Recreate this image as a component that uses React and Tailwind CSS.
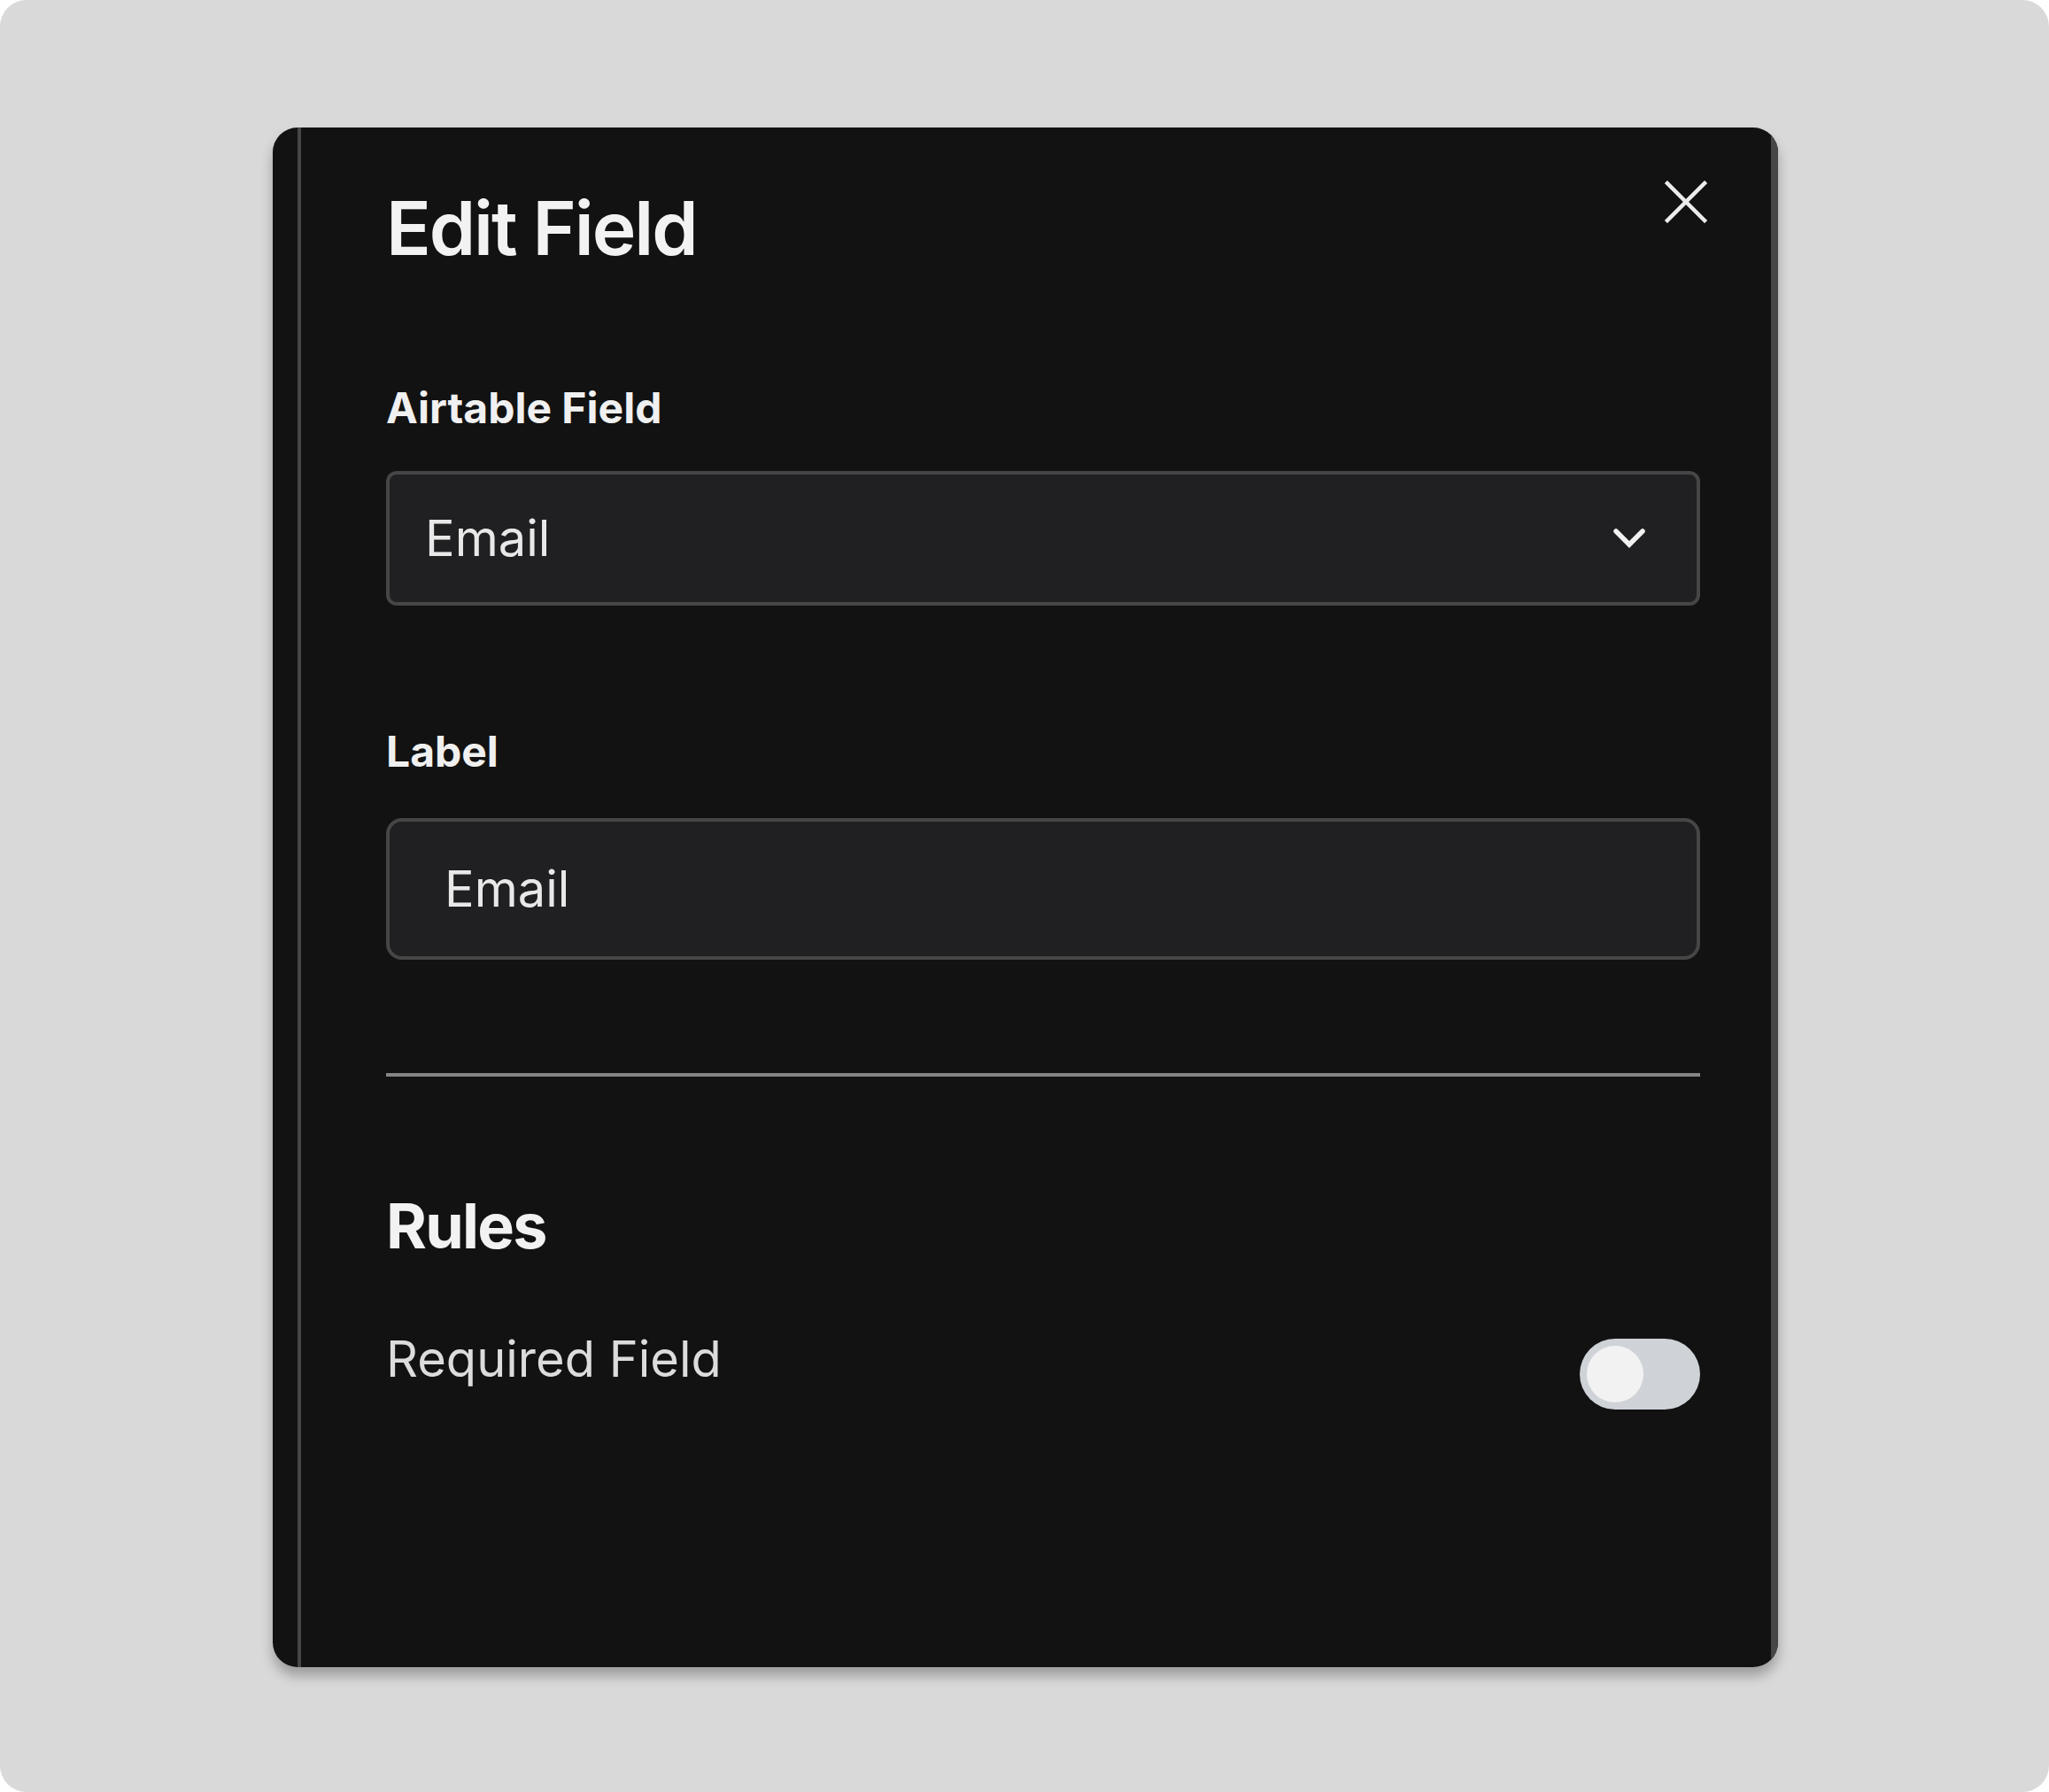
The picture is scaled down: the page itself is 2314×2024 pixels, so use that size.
import React, { useState } from "react";

function ChevronDown() {
  return (
    <svg width="40" height="28" viewBox="0 0 40 28" fill="none">
      <polyline
        points="5,6 20,21 35,6"
        stroke="#f2f2f2"
        strokeWidth="5.5"
        strokeLinecap="round"
        strokeLinejoin="miter"
      />
    </svg>
  );
}

function CloseIcon() {
  return (
    <svg width="48" height="48" viewBox="0 0 48 48" fill="none">
      <path d="M3 3L45 45M45 3L3 45" stroke="#ececec" strokeWidth="4.5" strokeLinecap="square" />
    </svg>
  );
}

export default function App() {
  const [required, setRequired] = useState(false);

  return (
    <div className="w-[2314px] h-[2024px] bg-white font-['Inter','Noto_Sans',sans-serif]">
      <div className="w-full h-full rounded-[30px] bg-[#d9d9d9] pt-[144px] pl-[308px]">
        {/* Sheet */}
        <div className="w-[1700px] h-[1739px] rounded-[28px] overflow-hidden bg-[#121212] flex shadow-[0_10px_14px_rgba(0,0,0,0.28)]">
          <div className="w-[28px] shrink-0" />
          <div className="flex-1 relative border-l-4 border-[#464646] pl-[96px] pr-[80px] flex flex-col">
            {/* Header */}
            <h1 className="mt-[72px] text-[84px] leading-none font-semibold tracking-tight text-[#f2f2f2]">
              Edit Field
            </h1>
            <button className="absolute top-[60px] right-[72px]">
              <CloseIcon />
            </button>

            {/* Airtable field select */}
            <label className="mt-[137px] text-[48px] leading-none font-bold text-[#f0f0f0]">
              Airtable Field
            </label>
            <div className="mt-[47px] h-[152px] rounded-[12px] border-4 border-[#464646] bg-[#202022] flex items-center justify-between pl-[40px] pr-[56px]">
              <span className="text-[56px] leading-none text-[#e8e8e8]">Email</span>
              <ChevronDown />
            </div>

            {/* Label input */}
            <label className="mt-[141px] text-[48px] leading-none font-bold text-[#f0f0f0]">
              Label
            </label>
            <div className="mt-[51px] h-[160px] rounded-[18px] border-4 border-[#464646] bg-[#202022] flex items-center pl-[62px]">
              <span className="text-[56px] leading-none text-[#e8e8e8]">Email</span>
            </div>

            <div className="mt-[128px] h-[4px] bg-[#858585]" />

            {/* Rules */}
            <h2 className="mt-[134px] text-[70px] leading-none font-bold tracking-tight text-[#f2f2f2]">
              Rules
            </h2>
            <div className="mt-[87px] flex justify-between items-start">
              <span className="text-[56px] leading-none text-[#dcdcdc]">Required Field</span>
              <button
                onClick={() => setRequired(!required)}
                className={
                  required
                    ? "mt-[5px] w-[136px] h-[80px] rounded-full bg-[#3b82f6] p-[8px] flex justify-end"
                    : "mt-[5px] w-[136px] h-[80px] rounded-full bg-[#cfd3d8] p-[8px] flex justify-start"
                }
              >
                <span className="w-[64px] h-[64px] rounded-full bg-[#f2f2f2]" />
              </button>
            </div>
          </div>
          <div className="w-[8px] shrink-0 bg-[#464646]" />
        </div>
      </div>
    </div>
  );
}
